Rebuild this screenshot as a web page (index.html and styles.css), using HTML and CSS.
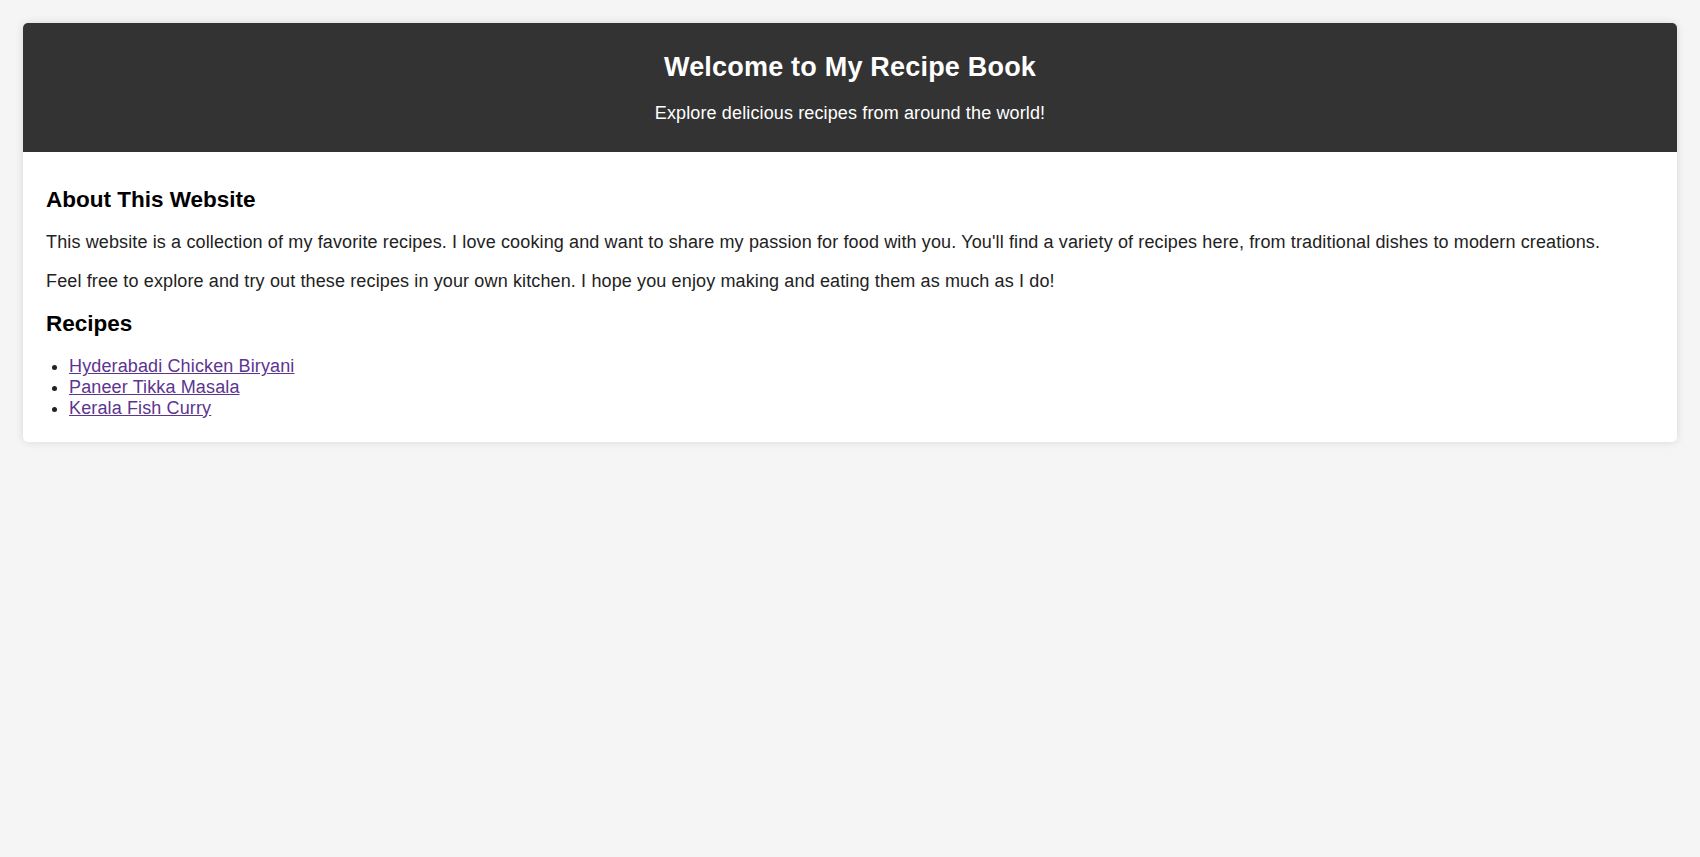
FILE: index.html
```html
<!DOCTYPE html>
<html lang="en">
<head>
<meta charset="utf-8">
<title>My Recipe Book</title>
<link rel="stylesheet" href="styles.css">
</head>
<body>
<div class="container">
  <header class="site-header">
    <h1 class="site-title">Welcome to My Recipe Book</h1>
    <p class="site-tagline">Explore delicious recipes from around the world!</p>
  </header>
  <main class="content">
    <h2 class="section-title">About This Website</h2>
    <p class="text">This website is a collection of my favorite recipes. I love cooking and want to share my passion for food with you. You'll find a variety of recipes here, from traditional dishes to modern creations.</p>
    <p class="text">Feel free to explore and try out these recipes in your own kitchen. I hope you enjoy making and eating them as much as I do!</p>
    <h2 class="section-title">Recipes</h2>
    <ul class="recipe-list">
      <li><a class="recipe-link" href="#">Hyderabadi Chicken Biryani</a></li>
      <li><a class="recipe-link" href="#">Paneer Tikka Masala</a></li>
      <li><a class="recipe-link" href="#">Kerala Fish Curry</a></li>
    </ul>
  </main>
</div>
</body>
</html>
```
FILE: styles.css
```css
html, body {
  margin: 0;
}
body {
  padding: 23px;
  background: #f5f5f5;
  font-family: "Liberation Sans", Arial, sans-serif;
  font-size: 18px;
  letter-spacing: 0.13px;
  color: #222;
}
.container {
  background: #fff;
  border-radius: 5px;
  box-shadow: 0 0 8px rgba(0, 0, 0, 0.12);
  overflow: hidden;
}
.site-header {
  background: #333;
  color: #fff;
  text-align: center;
  padding: 29px 20px 29px;
}
.site-title {
  margin: 0 0 19.5px;
  font-size: 27px;
  line-height: 31px;
  font-weight: bold;
  letter-spacing: 0.2px;
}
.site-tagline {
  margin: 0;
  font-size: 18px;
  line-height: 20.7px;
}
.content {
  padding: 15.3px 23px 5px;
}
.section-title {
  margin: 19.3px 0 19px;
  font-size: 22.5px;
  line-height: 25.9px;
  color: #000;
  letter-spacing: 0;
}
.text {
  margin: 19px 0;
  line-height: 20.7px;
}
.recipe-list {
  margin: 19px 0;
  padding-left: 23px;
  line-height: 20.7px;
}
.recipe-link {
  color: #5c3591;
}
```
